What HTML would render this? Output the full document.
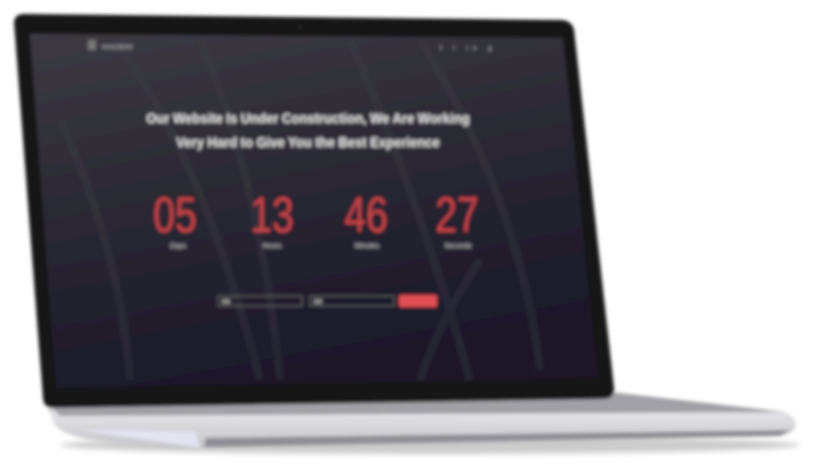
<!DOCTYPE html>
<html><head><meta charset="utf-8"><style>
html,body{margin:0;padding:0;background:#fff;width:820px;height:470px;overflow:hidden}
svg{display:block}
text{font-family:"Liberation Sans",sans-serif}
</style></head><body>
<svg width="820" height="470" viewBox="0 0 820 470">
<defs>
<filter id="b" x="-10%" y="-10%" width="120%" height="120%"><feGaussianBlur stdDeviation="1.8"/></filter>
<filter id="b2" x="-20%" y="-20%" width="140%" height="140%"><feGaussianBlur stdDeviation="3"/></filter>
<linearGradient id="scr" x1="0" y1="0" x2="0.3" y2="1">
<stop offset="0" stop-color="#3c3a42"/><stop offset="0.5" stop-color="#2a2832"/><stop offset="1" stop-color="#1a1828"/>
</linearGradient>
<linearGradient id="base" x1="0" y1="0" x2="0" y2="1">
<stop offset="0" stop-color="#b0b0b4"/><stop offset="0.4" stop-color="#e2e2e6"/><stop offset="1" stop-color="#c4c4c8"/>
</linearGradient>
</defs>
<ellipse cx="430" cy="445" rx="370" ry="9" fill="#999" opacity="0.5" filter="url(#b2)"/>
<g filter="url(#b)">
<path d="M44 400 L610 392 L785 412 Q798 418 795 428 Q792 434 780 436 L200 448 Q70 446 55 425 Z" fill="url(#base)"/>
<path d="M44 400 L610 392 L785 412 L60 416 Z" fill="#a0a0a6"/>
<path d="M80 430 L200 448 L195 432 Z" fill="#eef" opacity="0.7"/>
<path d="M205 447 L780 436 L790 430 L205 438 Z" fill="#8e8e94"/>
<path d="M14 22 Q15 14 24 14 L562 20 Q572 21 574 30 L614 388 Q615 398 604 399 L52 408 Q44 408 43 398 Z" fill="#121214"/>
<path d="M30 34 L563 38 L598 378 L56 388 Z" fill="url(#scr)"/>
<path d="M120 50 Q200 150 260 380 M200 40 Q260 180 280 380 M350 40 Q420 200 470 380 M420 40 Q520 200 540 370 M60 120 Q120 250 130 380 M480 260 Q440 320 420 380" stroke="#3e3e48" stroke-width="8" fill="none" opacity="0.35"/>
<circle cx="300" cy="27" r="1.5" fill="#333"/>
<rect x="88" y="40" width="8" height="10" fill="#777"/>
<text x="102" y="49" font-size="6" fill="#bbb">HANCEOM</text>
<text x="440" y="50" font-size="6" fill="#bbb" letter-spacing="5">f t in g</text>
<text x="308" y="123" font-size="14" font-weight="bold" fill="#e8e8e8" text-anchor="middle" transform="translate(308 0) scale(0.93 1) translate(-308 0)">Our Website Is Under Construction, We Are Working</text>
<text x="308" y="147" font-size="14" font-weight="bold" fill="#e8e8e8" text-anchor="middle" transform="translate(308 0) scale(0.93 1) translate(-308 0)">Very Hard to Give You the Best Experience</text>
<g fill="#c94448" font-size="50" text-anchor="middle">
<text transform="translate(175 232) scale(0.78 1)">05</text>
<text transform="translate(272 232) scale(0.78 1)">13</text>
<text transform="translate(366 232) scale(0.78 1)">46</text>
<text transform="translate(457 232) scale(0.78 1)">27</text>
</g>
<g fill="#ccc" font-size="7" text-anchor="middle">
<text x="178" y="248">Days</text><text x="272" y="248">Hours</text><text x="367" y="248">Minutes</text><text x="458" y="248">Seconds</text>
</g>
<rect x="218" y="296" width="84" height="10" fill="none" stroke="#666" stroke-width="1"/>
<rect x="310" y="296" width="84" height="10" fill="none" stroke="#666" stroke-width="1"/>
<rect x="222" y="299" width="8" height="5" fill="#888"/>
<rect x="314" y="299" width="8" height="5" fill="#888"/>
<rect x="399" y="295" width="38" height="12" rx="2" fill="#e05055"/>
</g>
</svg>
</body></html>
